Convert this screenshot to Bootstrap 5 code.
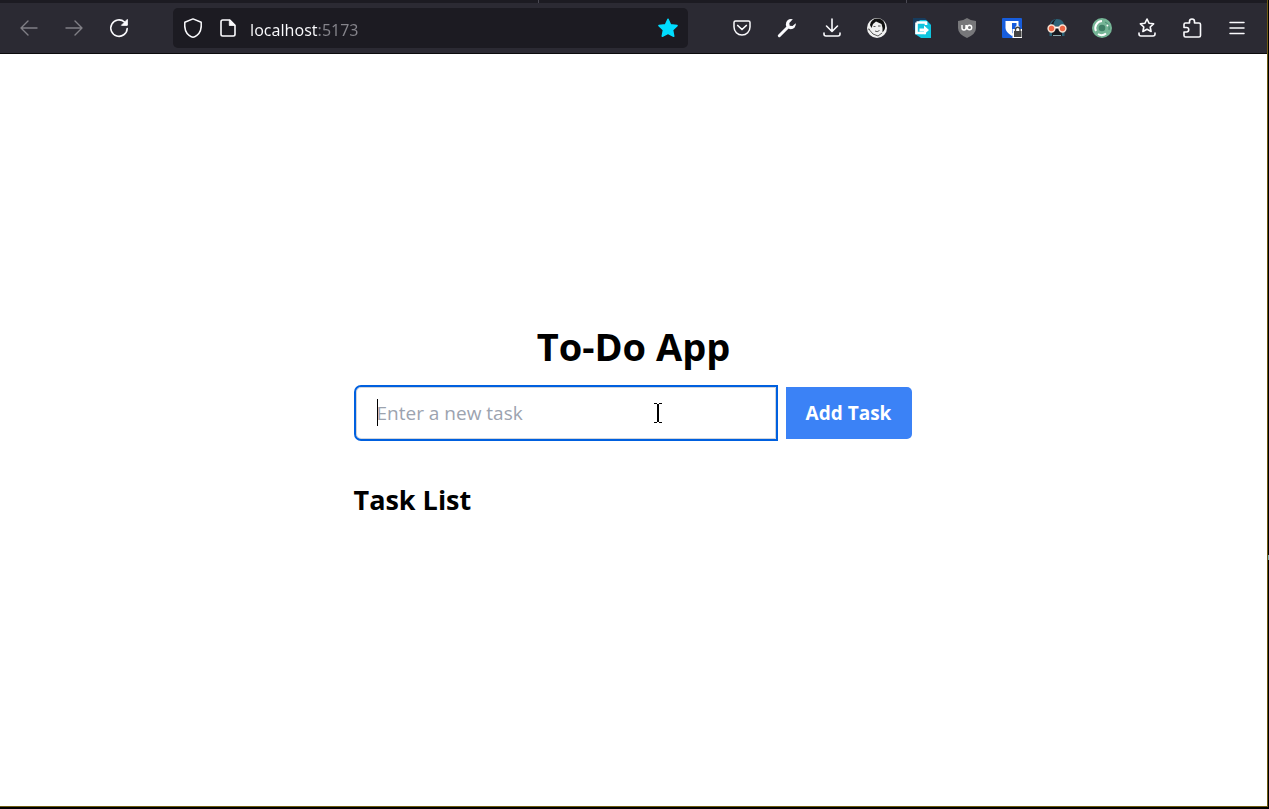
<!DOCTYPE html>
<html lang="en">
<head>
<meta charset="utf-8">
<meta name="viewport" content="width=device-width, initial-scale=1">
<title>To-Do App</title>
<link href="https://cdn.jsdelivr.net/npm/bootstrap@5.3.0/dist/css/bootstrap.min.css" rel="stylesheet">
<style>
  body { font-family: "Open Sans", "Noto Sans", sans-serif; color: #000; }
  .browser { border-right: 1px solid #000; border-bottom: 2px solid #000; background: #6e5c12; padding: 0 1px 1px 0; }
  .tab-strip { height: 3px; background: #1c1b22; }
  .tab-edge { width: 1px; height: 3px; background: #4a4953; }
  .tab-a { flex: 538 0 0; }
  .tab-b { flex: 367 0 0; }
  .tab-c { flex: 360 0 0; }
  .toolbar { height: 51px; padding: 0 8px 0 6px; background: #2b2a33; border-bottom: 1px solid #0c0c0d; }
  .tool { width: 45px; height: 40px; padding: 0; border: 0; background: none; color: #fbfbfe; display: flex; align-items: center; justify-content: center; }
  .tool:disabled { color: #807f86; }
  .tool svg, .url-bar svg { width: 20px; height: 20px; flex: none; display: block; }
  .url-bar { height: 40px; margin: 0 31px 0 32px; padding: 0 10px; gap: 15px; border-radius: 5px; background: #1c1b22; color: #fbfbfe; }
  .url-text { min-width: 0; margin-left: -3px; padding: 3px 0 0; border: 0; outline: 0; font: 16px/24px "Noto Sans", sans-serif; color: transparent;
    background: linear-gradient(90deg, #fbfbfe 68px, #85848b 68px); -webkit-background-clip: text; background-clip: text; }
  .bare { padding: 0; border: 0; background: none; }
  .todo { width: 100%; max-width: 560px; padding-bottom: 20px; }
  .todo h1 { font-size: 38px; line-height: 48px; margin-bottom: 17px; }
  .todo form { gap: 10px; padding: 0 2px; }
  .todo h2 { font-size: 27px; line-height: 36px; margin-top: 43px; }
  .task-input { height: 52px; padding: 0 20px; font-size: 19px; border: 1px solid #d1d5db; border-radius: 5px 0 0 5px; outline: 2px solid #0060df; color: #000; background: #fff; caret-color: transparent; }
  .task-input::placeholder { color: #9ca3af; opacity: 1; }
  .caret { position: absolute; left: 21px; top: 12px; width: 1px; height: 27px; background: #000; }
  .ibeam { position: absolute; right: 114px; top: 16px; width: 8px; height: 20px; pointer-events: none; }
  .add-btn { width: 126px; height: 52px; padding: 0; font-size: 19px; border: 0; border-radius: 0 5px 5px 0; background: #3b82f6; }
  .edge-mark { position: absolute; right: -1px; top: 555px; width: 1px; height: 5px; background: #7fb0b5; }
</style>
</head>
<body>
<div class="browser vh-100 d-flex flex-column position-relative">
  <div class="tab-strip d-flex">
    <span class="tab-a"></span><span class="tab-edge"></span><span class="tab-b"></span><span class="tab-edge"></span><span class="tab-c"></span>
  </div>
  <nav class="toolbar d-flex align-items-center" aria-label="Browser toolbar">
    <button class="tool" type="button" disabled aria-label="Back"><svg viewBox="0 0 20 20" fill="none" stroke="currentColor" stroke-width="1.4" stroke-linecap="round" stroke-linejoin="round"><path d="M18 10H2M9 3L2 10l7 7"/></svg></button>
    <button class="tool" type="button" disabled aria-label="Forward"><svg viewBox="0 0 20 20" fill="none" stroke="currentColor" stroke-width="1.4" stroke-linecap="round" stroke-linejoin="round"><path d="M2 10h16M11 3l7 7-7 7"/></svg></button>
    <button class="tool" type="button" aria-label="Reload"><svg viewBox="0 0 20 20" fill="none" stroke="currentColor" stroke-width="1.6" stroke-linecap="round"><path d="M15.500 4A8.200 8.200 0 1 0 18.200 10.500"/><path d="M18.300 1.800v5.500h-5.500z" fill="currentColor" stroke-width="1" stroke-linejoin="round"/></svg></button>
    <div class="url-bar d-flex align-items-center flex-grow-1">
      <button class="bare text-reset" type="button" aria-label="Site protection"><svg viewBox="0 0 20 20" fill="none" stroke="currentColor" stroke-width="1.500" stroke-linejoin="round"><path d="M10 .9l8.200 3.400q.8 9.500-4.300 13-2.400 1.800-3.900 1.900-1.500-.1-3.900-1.900Q1 13.800 1.800 4.300z"/></svg></button>
      <button class="bare text-reset" type="button" aria-label="Site information"><svg viewBox="0 0 20 20" fill="none" stroke="currentColor" stroke-width="1.600" stroke-linejoin="round"><path d="M11.500 2H4.700q-1.700 0-1.700 1.700v12.600Q3 18 4.700 18h10.600q1.700 0 1.700-1.700V7.200L11.800 2z"/><path d="M11.300 2v5.500H17z" fill="currentColor" stroke-width=".8"/></svg></button>
      <input class="url-text flex-grow-1" type="text" value="localhost:5173" aria-label="Address">
      <button class="bare" type="button" aria-label="Bookmark"><svg viewBox="0 0 20 20" fill="#00ddff" stroke="#00ddff" stroke-width="1.600" stroke-linejoin="round"><path d="M10 1.300l2.500 5.500 6.500.8-4.500 4.300 1.200 6.300-5.700-3-5.700 3 1.200-6.300L1 7.600l6.500-.8z"/></svg></button>
    </div>
    <button class="tool" type="button" aria-label="Pocket"><svg viewBox="0 0 20 20" fill="none" stroke="currentColor" stroke-width="1.500" stroke-linecap="round" stroke-linejoin="round"><path d="M3.500 3h13Q18 3 18 4.500V9a8 8 0 0 1-16 0V4.500Q2 3 3.500 3z"/><path d="M5.700 7.500l4.300 4 4.300-4" stroke-width="1.700"/></svg></button>
    <button class="tool" type="button" aria-label="Developer tools"><svg viewBox="0 0 20 20"><path d="M2.300 17.700l8-8" stroke="currentColor" stroke-width="3" stroke-linecap="round"/><path d="M15.800 1.300a5.200 5.200 0 0 0-7 5.800q1 4 5 4.200a5.200 5.200 0 0 0 5-6l-3.300 2.800-2.800-.4-.4-2.800z" fill="currentColor"/></svg></button>
    <button class="tool" type="button" aria-label="Downloads"><svg viewBox="0 0 20 20" fill="none" stroke="currentColor" stroke-width="1.600" stroke-linecap="round" stroke-linejoin="round"><path d="M10 1v12M4.500 8l5.500 5.500L15.500 8M2 15v1q0 2 2 2h12q2 0 2-2v-1"/></svg></button>
    <button class="tool" type="button" aria-label="Profile"><svg viewBox="0 0 20 20"><circle cx="10" cy="10" r="10" fill="#f1f1f1"/><path d="M3 7Q4 1 10 .5q6 0 7.500 5 1.500 4-.5 7l-1.500 2q.5-5-1-8.500L9 3.500 6 6 4.500 10z" fill="#111"/><path d="M6.500 8.500h2M11 8h2.500M8 13q2 1.500 4.500-.5M2.500 12l3.500 4 5 2 4-3M1 11l2 .5" fill="none" stroke="#444" stroke-width=".9"/></svg></button>
    <button class="tool" type="button" aria-label="Redirector"><svg viewBox="0 0 20 20"><path d="M1 0h12l6 6v5H7L1 12z" fill="#163c5e"/><path d="M8 2h6l5 5v13H9l-6-4V8z" fill="#10c5df"/><path d="M4.500 4.500H14V7M4.500 4.500V15H14" fill="none" stroke="#fff" stroke-width="2.600"/><path d="M7.500 10.500H12V7.500l5 4.500-5 4.500v-3H7.500z" fill="#fff"/></svg></button>
    <button class="tool" type="button" aria-label="Content blocker"><svg viewBox="0 0 20 20"><path d="M10 0q4 3 9 3v7q0 6-9 10-9-4-9-10V3q5 0 9-3z" fill="#77777a"/><path d="M5 7v3q0 2 2 2t2-2V7M9.500 11.500V7" fill="none" stroke="#fff" stroke-width="1.400"/><circle cx="12.500" cy="9.500" r="2.200" fill="none" stroke="#fff" stroke-width="1.400"/></svg></button>
    <button class="tool" type="button" aria-label="Password manager"><svg viewBox="0 0 20 20"><rect width="20" height="20" rx="1" fill="#175ddc"/><path d="M3.500 3h13v7q0 4-6.500 8-6.500-4-6.500-8z" fill="#fff"/><path d="M10 5h4.500v5q0 3-4.500 5.500z" fill="#175ddc"/><path d="M10.500 11H13q0-3.500 2.500-3.500T18 11h2v9h-9.500z" fill="#fff"/><path d="M12 13h7.500v6H12z" fill="#444"/><path d="M13.500 13v-1.500q0-2.300 2.200-2.300t2.300 2.300V13" fill="none" stroke="#444" stroke-width="1.400"/></svg></button>
    <button class="tool" type="button" aria-label="Privacy goggles"><svg viewBox="0 0 20 20"><path d="M2.500 18V9Q3 1 10 1t7.500 8v9z" fill="#2c6377"/><path d="M5 18v-7q2-3 5-3t5 3v7z" fill="#17191f"/><path d="M4 6q2-4 5-5Q6 4 6 8z" fill="#17191f"/><path d="M6 17.500h8" stroke="#8aa7ad"/><path d="M8 9.500h4" stroke="#fff" stroke-width="2"/><circle cx="4.500" cy="10.500" r="3.400" fill="#ee6645" stroke="#f8dfcf" stroke-width="1.500"/><circle cx="15.500" cy="10.500" r="3.400" fill="#ee6645" stroke="#f8dfcf" stroke-width="1.500"/></svg></button>
    <button class="tool" type="button" aria-label="Green disc"><svg viewBox="0 0 20 20"><circle cx="10" cy="10" r="10" fill="#75b596"/><circle cx="10" cy="10" r="3.300" fill="#3f7f66"/><path d="M10 3a7 7 0 0 0-6 10M6 16a7 7 0 0 0 8-.5" fill="none" stroke="#fff" stroke-width="2"/><path d="M13 4a7 7 0 0 1 4 8" fill="none" stroke="#4f9278" stroke-width="1.300"/><circle cx="15.500" cy="7.500" r="1" fill="#fff"/></svg></button>
    <button class="tool" type="button" aria-label="Bookmarks"><svg viewBox="0 0 20 20" fill="none" stroke="currentColor" stroke-width="1.600" stroke-linecap="round" stroke-linejoin="round"><path d="M10 1l2 4.200 4.600.6-3.400 3.200.9 4.500L10 11.300l-4.100 2.200.9-4.500-3.400-3.200L8 5.200zM2 15v1q0 2 2 2h12q2 0 2-2v-1"/></svg></button>
    <button class="tool" type="button" aria-label="Extensions"><svg viewBox="0 0 20 20" fill="none" stroke="currentColor" stroke-width="1.600" stroke-linejoin="round"><path d="M7.500 5V3.500a2.500 2.500 0 0 1 5 0V5H17q1.500 0 1.500 1.500v11q0 1.500-1.500 1.500H3.500Q2 19 2 17.500V14h2.500a2 2 0 0 0 0-4.500H2v-3Q2 5 3.500 5z"/></svg></button>
    <button class="tool" type="button" aria-label="Menu"><svg viewBox="0 0 20 20" stroke="currentColor" stroke-width="1.500" stroke-linecap="round"><path d="M3 4.500h14M3 10h14M3 15.500h14"/></svg></button>
  </nav>
  <main class="flex-grow-1 bg-white d-flex align-items-center justify-content-center">
    <div class="todo">
      <h1 class="fw-bold text-center">To-Do App</h1>
      <form class="d-flex">
        <div class="position-relative flex-grow-1">
          <input class="task-input w-100" type="text" placeholder="Enter a new task" aria-label="New task">
          <span class="caret"></span>
          <svg class="ibeam" viewBox="0 0 8 20" fill="none" stroke="#000" stroke-width="1" aria-hidden="true"><path d="M0 .5h3M5 .5h3M0 19.500h3M5 19.500h3M3 1.500h2M3 18.500h2"/><path d="M4 1v18" stroke-width="2"/></svg>
        </div>
        <button class="btn btn-primary add-btn fw-bold" type="button">Add Task</button>
      </form>
      <h2 class="fw-bold mb-0">Task List</h2>
    </div>
  </main>
  <span class="edge-mark"></span>
</div>
<script src="https://cdn.jsdelivr.net/npm/bootstrap@5.3.0/dist/js/bootstrap.bundle.min.js"></script>
</body>
</html>
